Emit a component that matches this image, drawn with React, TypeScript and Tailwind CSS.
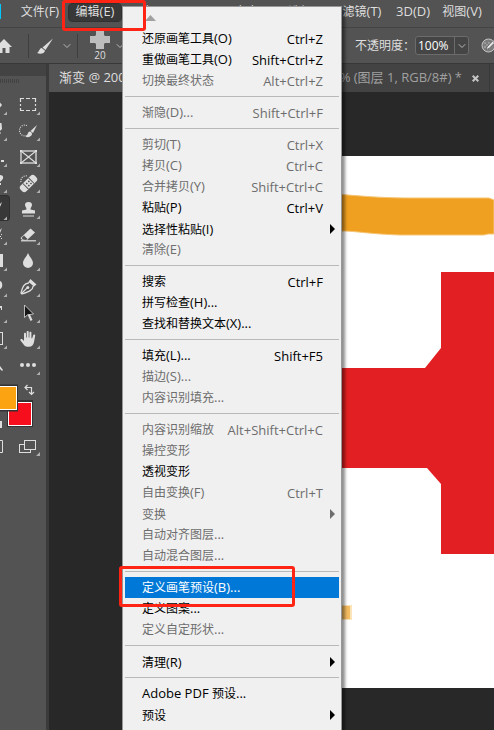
import type { ReactNode } from "react";
import { ChevronDown } from "lucide-react";

type Item = {
  prefix?: string;
  label: string;
  latin?: string;
  keys?: string;
  off?: boolean;
  sub?: boolean;
  active?: boolean;
};

const groups: Item[][] = [
  [
    { label: "还原画笔工具", latin: "(O)", keys: "Ctrl+Z" },
    { label: "重做画笔工具", latin: "(O)", keys: "Shift+Ctrl+Z" },
    { label: "切换最终状态", keys: "Alt+Ctrl+Z", off: true },
  ],
  [{ label: "渐隐", latin: "(D)...", keys: "Shift+Ctrl+F", off: true }],
  [
    { label: "剪切", latin: "(T)", keys: "Ctrl+X", off: true },
    { label: "拷贝", latin: "(C)", keys: "Ctrl+C", off: true },
    { label: "合并拷贝", latin: "(Y)", keys: "Shift+Ctrl+C", off: true },
    { label: "粘贴", latin: "(P)", keys: "Ctrl+V" },
    { label: "选择性粘贴", latin: "(I)", sub: true },
    { label: "清除", latin: "(E)", off: true },
  ],
  [
    { label: "搜索", keys: "Ctrl+F" },
    { label: "拼写检查", latin: "(H)..." },
    { label: "查找和替换文本", latin: "(X)..." },
  ],
  [
    { label: "填充", latin: "(L)...", keys: "Shift+F5" },
    { label: "描边", latin: "(S)...", off: true },
    { label: "内容识别填充", latin: "...", off: true },
  ],
  [
    { label: "内容识别缩放", keys: "Alt+Shift+Ctrl+C", off: true },
    { label: "操控变形", off: true },
    { label: "透视变形" },
    { label: "自由变换", latin: "(F)", keys: "Ctrl+T", off: true },
    { label: "变换", off: true, sub: true },
    { label: "自动对齐图层", latin: "...", off: true },
    { label: "自动混合图层", latin: "...", off: true },
  ],
  [
    { label: "定义画笔预设", latin: "(B)...", active: true },
    { label: "定义图案", latin: "..." },
    { label: "定义自定形状", latin: "...", off: true },
  ],
  [{ label: "清理", latin: "(R)", sub: true }],
  [
    { prefix: "Adobe PDF ", label: "预设", latin: "..." },
    { label: "预设", sub: true },
  ],
];

function MenuRow({ item }: { item: Item }) {
  const tone = item.active
    ? "bg-[#0078d7] text-white"
    : item.off
      ? "text-[#6d6d6d]"
      : "text-black";
  return (
    <button
      type="button"
      role="menuitem"
      aria-disabled={item.off}
      className={`flex h-[21px] w-full items-center justify-between pl-[17px] text-xs leading-5 whitespace-nowrap ${item.sub ? "pr-1" : "pr-4"} ${tone}`}
    >
      <span className={item.sub ? "pt-0.5" : ""}>
        {item.prefix && <span className="text-[13px]">{item.prefix}</span>}
        {item.label}
        {item.latin && <span className="text-[13px]">{item.latin}</span>}
      </span>
      {item.keys && <span className="text-[13px]">{item.keys}</span>}
      {item.sub && (
        <svg width="5" height="10" viewBox="0 0 5 10" aria-hidden="true">
          <path d="M0 0L5 5L0 10Z" fill="currentColor" />
        </svg>
      )}
    </button>
  );
}

function EditMenu() {
  return (
    <div
      role="menu"
      aria-label="编辑"
      className="absolute top-1.5 bottom-0 left-[122px] w-[220px] overflow-hidden border border-b-0 border-[#979797] bg-[#f0f0f0] px-0.5 shadow-[3px_3px_3px_rgba(0,0,0,0.45)]"
    >
      <div className="flex h-[21px] items-center pl-5">
        <svg width="11" height="6" viewBox="0 0 11 6" aria-hidden="true">
          <path d="M5.500 0L11 6H0Z" fill="#a0a0a0" />
        </svg>
      </div>
      {groups.map((group, i) => (
        <div key={i}>
          {i > 0 && (
            <div className="flex h-[11px] items-center">
              <hr className="w-full border-t border-[#b9b9b9]" />
            </div>
          )}
          {group.map((item) => (
            <MenuRow key={item.label} item={item} />
          ))}
        </div>
      ))}
    </div>
  );
}

const corner = <path d="M25 20.500V24H21.500Z" fill="#b0b0b0" />;

const tools: { name: string; art: ReactNode }[] = [
  {
    name: "矩形选框",
    art: <path d="M5.500 11V7.500H9M11 7.500H15M17 7.500H20.500V11M20.500 13V15M20.500 17V19.500H17M15 19.500H11M9 19.500H5.500V17M5.500 15V13" fill="none" stroke="#dedede" strokeWidth="1.200" />,
  },
  {
    name: "快速选择",
    art: (
      <>
        <path d="M12 8.500C7.500 7 4.500 10 4.500 13.500S8 20 12 18.500" fill="none" stroke="#dedede" strokeWidth="1.200" strokeDasharray="1 1.200" />
        <path d="M22 8L18 16L15.500 14Z" fill="#dedede" />
        <path d="M14.500 14.500C17.500 15 18 18 15 19.500C13.500 20.500 11.500 20.200 10.500 19.500C13 18.500 12 16 14.500 14.500Z" fill="#dedede" />
      </>
    ),
  },
  {
    name: "画框",
    art: (
      <g stroke="#dedede" fill="none">
        <rect x="6" y="8" width="15" height="12" strokeWidth="1.300" />
        <path d="M6 8L21 20M21 8L6 20" strokeWidth="1.100" />
        <path d="M5 7h2v2H5zM20 7h2v2h-2zM5 19h2v2H5zM20 19h2v2h-2z" fill="#dedede" stroke="none" />
      </g>
    ),
  },
  {
    name: "污点修复画笔",
    art: (
      <>
        <path d="M6 13A5 5 0 0 1 12 7" fill="none" stroke="#dedede" strokeWidth="1.200" strokeDasharray="1 1.200" />
        <g transform="rotate(-45 13.500 14.500)">
          <rect x="3.500" y="10.500" width="20" height="8" rx="3" fill="#dedede" />
          <path d="M9.500 10.500V18.500M17.500 10.500V18.500" stroke="#535353" />
          <path d="M11.500 12.500h1.500v1.500h-1.500zM14.500 12.500h1.500v1.500h-1.500zM11.500 15.500h1.500v1.500h-1.500zM14.500 15.500h1.500v1.500h-1.500z" fill="#535353" />
        </g>
      </>
    ),
  },
  {
    name: "仿制图章",
    art: (
      <path d="M13.500 7C15.800 7 17 8.300 17 10C17 11.500 15.500 12.300 15.500 14.500L20 15.500V18.500H7V15.500L11.500 14.500C11.500 12.300 10 11.500 10 10C10 8.300 11.200 7 13.500 7ZM8 20.500H19V21.500H8Z" fill="#dedede" />
    ),
  },
  {
    name: "橡皮擦",
    art: (
      <>
        <path d="M15.500 7.500L20 11.500L11.500 19.500H7.500L5.500 17Z" fill="#dedede" />
        <path d="M9 14.500L12.500 18L11 19L7.500 18.500L6.800 16.800Z" fill="#535353" />
        <path d="M6 19.800H21" stroke="#dedede" strokeWidth="1.200" />
      </>
    ),
  },
  {
    name: "模糊",
    art: <path d="M13 6C14.500 10 18 12.500 18 16A5 5 0 0 1 8 16C8 12.500 11.500 10 13 6Z" fill="#dedede" />,
  },
  {
    name: "钢笔",
    art: (
      <>
        <path d="M15.500 7L20.500 11.500L18 13.500C18 17 14 18.500 7 21L6 20C7.500 14 9 10.500 13.500 10Z" fill="none" stroke="#dedede" strokeWidth="1.300" />
        <path d="M15.500 7L20.500 11.500L18.500 13.200L13.800 9Z" fill="#dedede" />
        <path d="M6.500 20.500L12 15" stroke="#dedede" strokeWidth="1.100" />
        <circle cx="12.800" cy="14.500" r="1.500" fill="#dedede" />
      </>
    ),
  },
  {
    name: "路径选择",
    art: (
      <>
        <path d="M13.500 15L16.500 21.500" stroke="#dedede" strokeWidth="2.200" />
        <path d="M9.500 6V18.500L12.500 15.800L18.500 15Z" fill="#161616" stroke="#dedede" strokeWidth=".8" />
      </>
    ),
  },
  {
    name: "抓手",
    art: (
      <path d="M9 20L5.500 15.500C4.800 14.300 6.400 13.500 7.300 14.300L9 16V8.800C9 7.300 11 7.300 11 8.800V12.500H11.700V7C11.700 5.600 13.700 5.600 13.700 7V12.500H14.400V7.800C14.400 6.400 16.400 6.400 16.400 7.800V13.200H17.200L18.200 10.200C18.700 8.900 20.500 9.400 20.200 10.800L19 17C18.500 20 16.800 21.800 14 21.800C11.700 21.800 10.200 21.500 9 20Z" fill="#dedede" />
    ),
  },
  {
    name: "编辑工具栏",
    art: (
      <g fill="#dedede">
        <circle cx="7" cy="14" r="2" />
        <circle cx="13" cy="14" r="2" />
        <circle cx="19" cy="14" r="2" />
      </g>
    ),
  },
];

const leftTools: { name: string; art: ReactNode }[] = [
  { name: "移动", art: <path d="M0 11.500L2 14L0 16.500Z" /> },
  { name: "套索", art: <path d="M0 6H1.500L2 12L0 14ZM0 15L1 16L0 17Z" /> },
  { name: "裁剪", art: <path d="M1 17H4V19H1Z" /> },
  { name: "吸管", art: <path d="M0 6C3.500 6 4 9 2 11L0 13ZM0 14H1V16H0Z" /> },
  { name: "画笔", art: <path d="M2 6L0 8V11Z" /> },
  { name: "历史记录画笔", art: <path d="M2 7L0 9V12ZM1 13h1v1H1zM0 15h1v1H0zM1 17h1v1H1z" /> },
  { name: "渐变", art: <path d="M0 7H3V20H0Z" /> },
  { name: "减淡", art: <path d="M0 8C3 9 3 15 0 16Z" /> },
  { name: "文字", art: <path d="M0 7H2V11H1V9H0Z" /> },
  { name: "矩形", art: <path d="M0 7H3V20H0V19H2V8H0Z" /> },
  { name: "缩放", art: <path d="M0 15L3 19L2 20L0 18Z" /> },
];

function ToolPanel() {
  return (
    <aside className="flex w-[49px] shrink-0 flex-col border-r-[3px] border-[#3b3b3b] bg-[#535353]">
      <div className="h-3 bg-[#434343]" />
      <div className="h-[15px] pt-[3px]">
        <div className="h-1 w-5 bg-[repeating-linear-gradient(90deg,#424242_0_1px,#535353_1px_2px)]" />
      </div>
      <div className="flex">
        <div className="w-[10px]">
          {leftTools.map((t, i) => (
            <button
              key={t.name}
              type="button"
              aria-label={t.name}
              className={`block h-[26px] w-full ${i === 4 ? "rounded-r-sm border border-l-0 border-[#2f2f2f] bg-[#383838]" : ""}`}
            >
              <svg width="9" height="26" viewBox="0 0 9 26" fill="#dedede" aria-hidden="true">
                {t.art}
                {i < 10 && <path d="M7 20.500V24H3.500Z" fill="#b0b0b0" />}
              </svg>
            </button>
          ))}
        </div>
        <div className="ml-[5px]">
          {tools.map((t) => (
            <button key={t.name} type="button" aria-label={t.name} className="block h-[26px]">
              <svg width="26" height="26" viewBox="0 0 26 26" aria-hidden="true">
                {t.art}
                {corner}
              </svg>
            </button>
          ))}
        </div>
      </div>
      <svg width="46" height="80" viewBox="0 377 46 80" role="img" aria-label="前景色和背景色">
        <path d="M25 387.500H31.500V394M27.500 385L25 387.500L27.500 390M29 392L31.500 394.500L34 392" fill="none" stroke="#dedede" strokeWidth="1.200" />
        <rect x="7" y="400" width="26" height="27" fill="#333" />
        <rect x="8.500" y="402.500" width="23" height="23" fill="#f70e1c" stroke="#fff" />
        <rect x="-8" y="384.500" width="26" height="27" fill="#333" />
        <rect x="-7" y="386.500" width="23.500" height="23" fill="#fba311" stroke="#fff" />
        <path d="M0 421H2V428H0Z" fill="#dedede" />
        <path d="M0 440.500H2.500V452.500H0" fill="none" stroke="#dedede" />
        <rect x="19.500" y="444.500" width="11" height="8" fill="none" stroke="#dedede" />
        <rect x="24.500" y="440.500" width="11" height="9" fill="#535353" stroke="#dedede" />
        <path d="M40 452V456H36Z" fill="#b0b0b0" />
      </svg>
    </aside>
  );
}

function MenuBarItem({ label, latin, width, open }: { label: string; latin: string; width: string; open?: boolean }) {
  return (
    <button
      type="button"
      className={`h-[17px] shrink-0 pb-0.5 text-xs leading-[15px] whitespace-nowrap ${width} ${open ? "rounded-[3px] bg-[#383838] outline outline-[#303030]" : ""}`}
    >
      {label}
      <span className="text-[13px]">{latin}</span>
    </button>
  );
}

export default function App() {
  return (
    <div className="relative flex h-screen flex-col overflow-hidden bg-[#282828] font-['Open_Sans','Noto_Sans_CJK_SC',sans-serif] text-[#dedede]">
      <nav className="flex h-[27px] shrink-0 items-start bg-[#535353] pt-1">
        <div className="h-[15px] w-px bg-[#00c8ff]" />
        <MenuBarItem label="文件" latin="(F)" width="ml-3 w-[54px]" />
        <MenuBarItem label="编辑" latin="(E)" width="ml-0.5 w-[52px]" open />
        <MenuBarItem label="图像" latin="(I)" width="w-[52px]" />
        <MenuBarItem label="图层" latin="(L)" width="w-[54px]" />
        <MenuBarItem label="文字" latin="(Y)" width="w-[54px]" />
        <MenuBarItem label="选择" latin="(S)" width="w-[54px]" />
        <MenuBarItem label="滤镜" latin="(T)" width="w-[54px]" />
        <MenuBarItem label="" latin="3D(D)" width="w-12" />
        <MenuBarItem label="视图" latin="(V)" width="w-[50px]" />
      </nav>

      <header className="flex h-9 shrink-0 items-center justify-between border-t border-[#434343] bg-[#535353]">
        <div className="flex h-full items-center">
          <button type="button" aria-label="主页">
            <svg width="12" height="16" viewBox="0 0 12 16" fill="#dedede">
              <path d="M4 1L12 9H9.500V15H5.500V10H2.500V15H0V5Z" />
            </svg>
          </button>
          <div className="ml-4 h-6 w-px bg-[#3e3e3e]" />
          <button type="button" aria-label="画笔" className="ml-2">
            <svg width="16" height="18" viewBox="0 0 16 18" fill="#dedede">
              <path d="M16 1.500L8.500 13L5.500 10.500Z" />
              <path d="M4.800 11L8 13.700C7.500 16.500 3.500 17.500 0 16C2.500 15 2 11.500 4.800 11Z" />
            </svg>
          </button>
          <ChevronDown size={12} className="ml-2 text-[#b8b8b8]" />
          <div className="ml-1 h-6 w-px bg-[#3e3e3e]" />
          <button type="button" className="ml-3 flex w-5 flex-col items-center text-[10px] leading-3">
            <svg width="20" height="19" viewBox="0 0 20 19" aria-hidden="true">
              <path d="M6 0H14V5L15 6H20V13H15L14 14V19H6V14L5 13H0V6H5L6 5Z" fill="#bdbdbd" />
            </svg>
            20
          </button>
          <ChevronDown size={12} className="ml-1 text-[#b8b8b8]" />
        </div>
        <div className="flex items-center">
          <label htmlFor="opacity" className="text-xs">
            不透明度：
          </label>
          <div className="flex h-[19px] w-[54px] rounded-[3px] border border-[#6b6b6b] bg-[#454545]">
            <input
              id="opacity"
              defaultValue="100%"
              className="w-[38px] bg-transparent pl-0.5 text-xs text-white outline-none"
            />
            <button
              type="button"
              aria-label="不透明度选项"
              className="flex flex-1 items-center justify-center border-l border-[#6b6b6b]"
            >
              <ChevronDown size={12} className="text-[#b8b8b8]" />
            </button>
          </div>
          <button type="button" aria-label="不透明度压力" className="ml-3">
            <svg width="13" height="15" viewBox="0 0 13 15">
              <circle cx="7.500" cy="7.500" r="6.500" fill="#7c7c7c" stroke="#c4c4c4" />
              <path d="M3 4h2v2H3zM7 4h2v2H7zM5 6h2v2H5zM3 8h2v2H3zM5 10h2v2H5z" fill="#999" />
              <path d="M13 1.500L6 9L5 11.500L8 10.500L13 5.500Z" fill="#e4e4e4" stroke="#535353" strokeWidth=".7" />
            </svg>
          </button>
        </div>
      </header>

      <div className="flex min-h-0 flex-1 border-t border-[#383838]">
        <ToolPanel />
        <main className="flex min-w-0 flex-1 flex-col">
          <div role="tablist" className="flex h-7 shrink-0 bg-[#434343] pr-1 text-[13px] whitespace-nowrap">
            <button type="button" role="tab" aria-selected="true" className="w-[180px] overflow-hidden bg-[#535353] pl-2.5 text-left">
              渐变 @ 200%
            </button>
            <div className="ml-auto flex items-center border-r border-[#383838] pr-2.5 text-[#a0a0a0]">
              <button type="button" role="tab" aria-selected="false">
                33% (图层 1, RGB/8#) *
              </button>
              <button type="button" aria-label="关闭" className="ml-2.5">
                <svg width="7" height="7" viewBox="0 0 7 7">
                  <path d="M.7.7L6.300 6.300M6.300.7L.7 6.300" stroke="#c4c4c4" strokeWidth="2" />
                </svg>
              </button>
            </div>
          </div>
          <div className="min-h-0 flex-1 pt-[64px] pb-[42px] pl-[200px]">
            <div className="h-full overflow-hidden bg-white">
              <svg width="245" height="532" viewBox="249 156 245 532" role="img" aria-label="画布">
                <path d="M249 192L342 194.500C370 197 390 198 410 198H489L494 200V234H488L484 235H400C370 234 355 231 342 231H249Z" fill="#f0a020" stroke="#f6c575" />
                <path d="M249 368H425L441 348V272H494V554H441V484L427 468H249Z" fill="#e21f22" />
                <rect x="330" y="605" width="22" height="15" fill="#fbe3ba" />
                <rect x="330" y="606" width="20" height="13" fill="#f5bd61" />
              </svg>
            </div>
          </div>
        </main>
      </div>

      <EditMenu />
      <div className="pointer-events-none absolute top-0 left-[62px] h-[31px] w-[84px] rounded-[3px] border-[3px] border-[#ff2414]" />
      <div className="pointer-events-none absolute top-[566px] left-[119px] h-[41px] w-[176px] rounded-[3px] border-[3px] border-[#ff2414]" />
    </div>
  );
}
